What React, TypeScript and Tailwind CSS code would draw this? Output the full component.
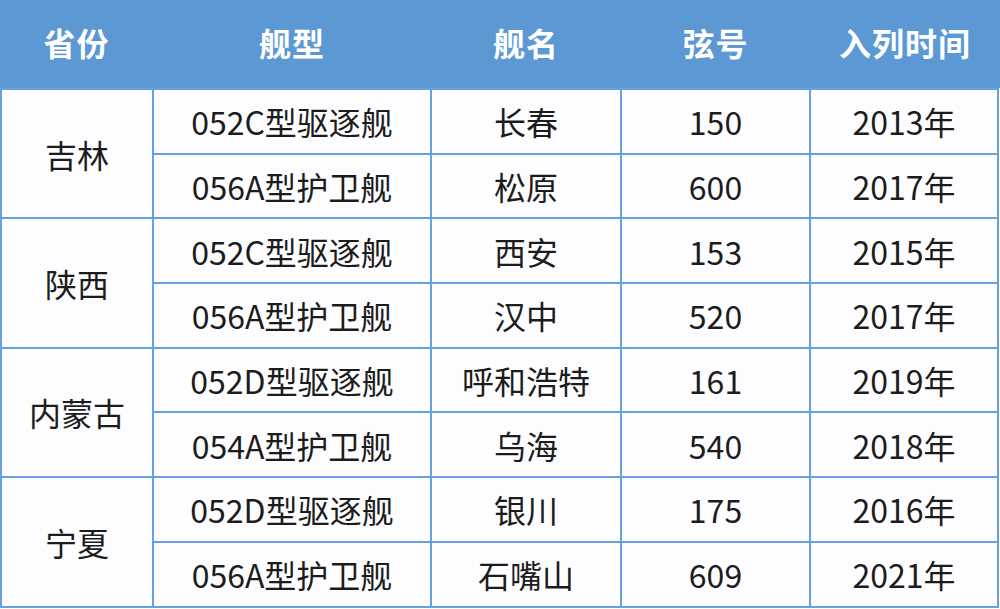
import { Fragment } from 'react';

const headers = ['省份', '舰型', '舰名', '弦号', '入列时间'];

const groups = [
  {
    province: '吉林',
    ships: [
      ['052C型驱逐舰', '长春', '150', '2013年'],
      ['056A型护卫舰', '松原', '600', '2017年'],
    ],
  },
  {
    province: '陕西',
    ships: [
      ['052C型驱逐舰', '西安', '153', '2015年'],
      ['056A型护卫舰', '汉中', '520', '2017年'],
    ],
  },
  {
    province: '内蒙古',
    ships: [
      ['052D型驱逐舰', '呼和浩特', '161', '2019年'],
      ['054A型护卫舰', '乌海', '540', '2018年'],
    ],
  },
  {
    province: '宁夏',
    ships: [
      ['052D型驱逐舰', '银川', '175', '2016年'],
      ['056A型护卫舰', '石嘴山', '609', '2021年'],
    ],
  },
];

const font = { fontFamily: '"Noto Sans CJK SC", "Noto Sans", sans-serif' };

export default function App() {
  return (
    <div className="w-[1000px] h-[609px] overflow-hidden bg-white" style={font}>
      {/* header band */}
      <div className="grid grid-cols-[153px_278px_190px_189px_190px] h-[88px] bg-[#5b98d4] text-white text-[32px] font-bold">
        {headers.map((h) => (
          <div key={h} className="flex items-center justify-center pb-1 tracking-[1px]">
            {h}
          </div>
        ))}
      </div>

      {/* body grid, gaps give the cell lines */}
      <div className="grid grid-cols-[150px_276px_188px_187px_186px] grid-rows-[repeat(8,62.7px)] gap-[2px] px-[2px] py-[2px] w-[999px] bg-[#66a2de] text-[32px] text-[#1c1c1c]">
        {groups.map((g, gi) => (
          <Fragment key={gi}>
            <div
              className="bg-[#fdfdff] flex items-center justify-center"
              style={{ gridRow: `${gi * 2 + 1} / span 2`, gridColumn: 1 }}
            >
              {g.province}
            </div>
            {g.ships.map((s, si) =>
              s.map((c, ci) => (
                <div
                  key={`${si}-${ci}`}
                  className="bg-[#fdfdff] flex items-center justify-center"
                  style={{ gridRow: gi * 2 + si + 1, gridColumn: ci + 2 }}
                >
                  {c}
                </div>
              )),
            )}
          </Fragment>
        ))}
      </div>
    </div>
  );
}
